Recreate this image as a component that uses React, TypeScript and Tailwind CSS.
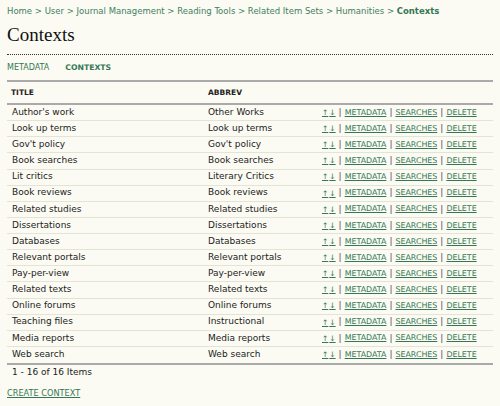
import React from "react";

const rows: [string, string][] = [
  ["Author's work", "Other Works"],
  ["Look up terms", "Look up terms"],
  ["Gov't policy", "Gov't policy"],
  ["Book searches", "Book searches"],
  ["Lit critics", "Literary Critics"],
  ["Book reviews", "Book reviews"],
  ["Related studies", "Related studies"],
  ["Dissertations", "Dissertations"],
  ["Databases", "Databases"],
  ["Relevant portals", "Relevant portals"],
  ["Pay-per-view", "Pay-per-view"],
  ["Related texts", "Related texts"],
  ["Online forums", "Online forums"],
  ["Teaching files", "Instructional"],
  ["Media reports", "Media reports"],
  ["Web search", "Web search"],
];

const crumbs = [
  "Home",
  "User",
  "Journal Management",
  "Reading Tools",
  "Related Item Sets",
  "Humanities",
];

function ActionLink({ children }: { children: React.ReactNode }) {
  return (
    <a href="#" className="text-[7.9px] uppercase text-[#337755] underline underline-offset-[1px]">
      {children}
    </a>
  );
}

function Sep() {
  return <span className="mx-[3px] text-[#5a4a55]">|</span>;
}

export default function App() {
  return (
    <div
      className="h-[406px] w-[500px] overflow-hidden bg-[#fbfbf3] px-[7px] text-[9px] text-[#222]"
      style={{ fontFamily: '"DejaVu Sans", Verdana, sans-serif' }}
    >
      {/* breadcrumb */}
      <div className="h-[22px] whitespace-nowrap pt-[5px] text-[8.5px] leading-[12px] text-[#3f8062]">
        {crumbs.map((c) => (
          <React.Fragment key={c}>
            <a href="#">{c}</a>
            {" > "}
          </React.Fragment>
        ))}
        <a href="#" className="font-bold text-[#337755]">
          Contexts
        </a>
      </div>

      <h2
        className="h-[26px] text-[19px] leading-[26px] text-[#111]"
        style={{ fontFamily: '"Liberation Serif", "Times New Roman", serif' }}
      >
        Contexts
      </h2>

      <div className="mt-[6px] border-t border-dotted border-[#333]" />

      {/* tabs */}
      <div className="flex h-[25px] items-center gap-[16px] text-[8px] uppercase text-[#337755]">
        <a href="#">Metadata</a>
        <a href="#" className="text-[7.7px] font-bold">
          Contexts
        </a>
      </div>

      {/* table */}
      <div className="border-t-2 border-[#aaa]" />
      <div className="flex h-[21px] items-center text-[7.5px] font-bold uppercase">
        <div className="w-[197px] pl-[4px]">Title</div>
        <div className="pl-[4px]">Abbrev</div>
      </div>
      <div className="border-t-2 border-[#aaa]" />
      {rows.map(([title, abbrev], i) => (
        <div
          key={title}
          className={
            "flex h-[16.13px] items-center whitespace-nowrap " +
            (i < rows.length - 1 ? "border-b border-[#e4e4d6]" : "")
          }
        >
          <div className="w-[197px] pl-[5px]">{title}</div>
          <div className="w-[114px] pl-[4px]">{abbrev}</div>
          <div className="flex items-center pl-[4px]">
            <a href="#" className="text-[7.5px] text-[#337755] underline">
              ↑
            </a>
            <a href="#" className="ml-[1px] text-[7.5px] text-[#337755] underline">
              ↓
            </a>
            <Sep />
            <ActionLink>Metadata</ActionLink>
            <Sep />
            <ActionLink>Searches</ActionLink>
            <Sep />
            <ActionLink>Delete</ActionLink>
          </div>
        </div>
      ))}
      <div className="border-t-2 border-[#aaa]" />
      <div className="flex h-[16px] items-center pl-[5px]">1 - 16 of 16 Items</div>

      <div className="mt-[6px] leading-[12px]">
        <a href="#" className="text-[8.2px] uppercase text-[#337755] underline">
          Create Context
        </a>
      </div>
    </div>
  );
}
